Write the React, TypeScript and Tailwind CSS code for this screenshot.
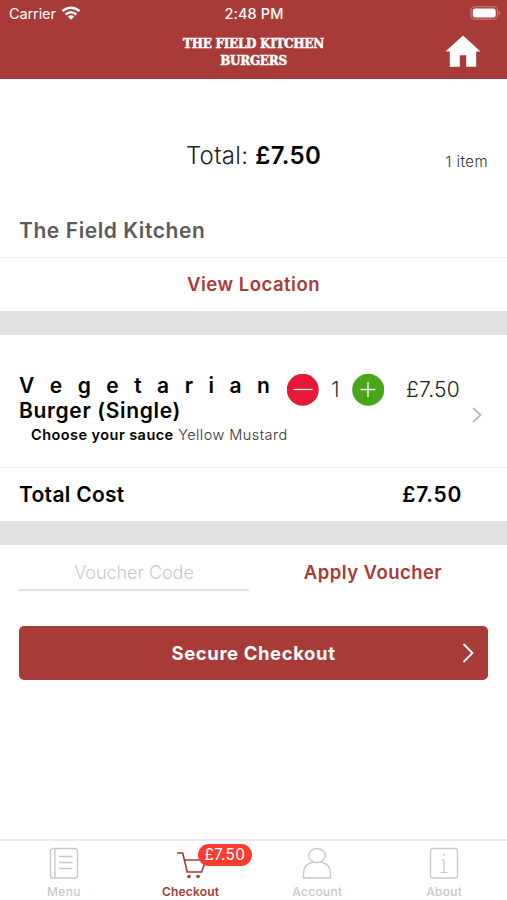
import React, { useState } from 'react';

interface TabProps {
    label: string;
    active?: boolean;
    badge?: string;
    children: React.ReactNode;
}

const Tab: React.FC<TabProps> = ({ label, active, badge, children }) => (
    <button className={`relative flex flex-1 flex-col items-center pt-1.5 ${active ? 'text-[#a83a38]' : 'text-[#c9c9c9]'}`}>
        <svg className="ml-px h-9 w-9" viewBox="0 0 36 36" fill="none" stroke="currentColor" strokeWidth="1.4">
            {children}
        </svg>
        <span className={`mt-px ml-px text-[12px] leading-4 ${active ? 'font-semibold tracking-[0.2px]' : 'font-medium tracking-[0.3px]'}`}>{label}</span>
        {badge && (
            <span className="absolute top-[3px] left-[71px] flex h-[22px] w-[54px] items-center justify-center rounded-full bg-[#fc3b31] text-[15.5px] tracking-[0.2px] text-white">
                {badge}
            </span>
        )}
    </button>
);

const StatusBar = () => (
    <div className="flex h-[27px] items-center justify-between pr-[6px] pl-[9px] text-[14.5px] text-white">
        <div className="flex flex-1 items-center gap-[5px]">
            <span className="tracking-[-0.1px]">Carrier</span>
            <svg className="mb-px h-[14px] w-[20px]" viewBox="0 0 20 14" fill="none" stroke="currentColor" strokeWidth="2.5">
                <path d="M1.5 5.2C6.2 .6 13.8 .6 18.5 5.2" />
                <path d="M4.6 8.5C7.6 5.6 12.4 5.6 15.4 8.5" />
                <path d="M10 13.8 6.8 10.5C8.6 8.9 11.4 8.9 13.2 10.5Z" fill="currentColor" stroke="none" />
            </svg>
        </div>
        <span className="mr-[2px] font-medium tracking-[0.1px]">2:48 PM</span>
        <div className="flex flex-1 justify-end">
            <svg className="mb-px h-[14px] w-[31px]" viewBox="0 0 31 14" fill="none">
                <rect x="1" y=".8" width="26.5" height="12.4" rx="3.8" stroke="#cf8280" strokeWidth="1.1" />
                <rect x="2.8" y="2.6" width="22.9" height="8.8" rx="2.2" fill="#fff" />
                <path d="M28.8 4.8c2 .8 2 3.6 0 4.4Z" fill="#cf8280" />
            </svg>
        </div>
    </div>
);

const App: React.FC = () => {
    const [quantity, setQuantity] = useState(1);
    const [voucher, setVoucher] = useState('');

    const cost = `£${(quantity * 7.5).toFixed(2)}`;

    return (
        <div className="flex h-[900px] w-[507px] flex-col overflow-hidden bg-white font-['Inter','Liberation_Sans',sans-serif] text-black">
            {/* Header */}
            <header className="h-[79px] bg-[#a83a38]">
                <StatusBar />
                <div className="flex h-[52px] items-start justify-between pr-[26px] pl-[26px]">
                    <span className="w-9" />
                    <h1 className="mt-[9px] text-center font-['DejaVu_Serif','Liberation_Serif',serif] text-[12px] leading-[17px] font-bold tracking-[-0.3px] text-white [-webkit-text-stroke:0.5px_white]">
                        THE FIELD KITCHEN
                        <br />
                        BURGERS
                    </h1>
                    <button aria-label="Home" className="mt-[8px]">
                        <svg className="h-8 w-9" viewBox="0 0 36 32" fill="#fff">
                            <path d="M18 .5 35.5 16.5h-4.3v15.2H21.2V20.3h-6.4v11.4H4.8v-15.2H.5Z" />
                        </svg>
                    </button>
                </div>
            </header>

            {/* Order summary */}
            <section className="h-[179px] border-b border-[#f0f0f0] px-[19px]">
                <div className="flex items-baseline pt-[61px]">
                    <span className="flex-1" />
                    <p className="text-[24px] leading-8 font-light tracking-[0.3px] text-[#222]">
                        Total: <span className="font-semibold text-black">{cost}</span>
                    </p>
                    <span className="relative top-[3px] flex-1 text-right text-[15px] font-light tracking-[0.45px] text-[#333]">{quantity} item</span>
                </div>
                <h2 className="mt-[43px] text-[21px] leading-8 font-semibold tracking-[0.57px] text-[#5b5b5b]">The Field Kitchen</h2>
            </section>
            <button className="h-[53px] text-[18.5px] font-semibold tracking-[0.52px] text-[#a83a38]">View Location</button>
            <div className="h-6 bg-[#e2e2e4]" />

            {/* Basket item */}
            <section className="flex h-[133px] border-b border-[#f0f0f0] pt-[38px] pl-[19px]">
                <div className="w-[267.5px]">
                    <h3 className="text-[21px] leading-[25px] font-semibold">
                        <span className="flex w-[251px] justify-between">
                            {'Vegetarian'.split('').map((letter, i) => (
                                <span key={i}>{letter}</span>
                            ))}
                        </span>
                        <span className="tracking-[0.65px]">Burger (Single)</span>
                    </h3>
                    <p className="pl-3 text-[14.5px] leading-6 font-light tracking-[0.45px] whitespace-nowrap text-[#333]">
                        <span className="font-semibold text-black">Choose your sauce</span> Yellow Mustard
                    </p>
                </div>
                <div className="flex h-[33px] items-center">
                    <button aria-label="Remove one" onClick={() => setQuantity(Math.max(1, quantity - 1))}>
                        <svg className="h-8 w-8" viewBox="0 0 32 32" stroke="#fff" strokeWidth="1.3">
                            <circle cx="15.7" cy="15.7" r="16" fill="#e71737" stroke="none" />
                            <path d="M6.5 15.5h19" />
                        </svg>
                    </button>
                    <span className="w-[34px] text-center text-[21px] font-light text-[#333]">{quantity}</span>
                    <button aria-label="Add one" onClick={() => setQuantity(quantity + 1)}>
                        <svg className="h-8 w-8 overflow-visible" viewBox="0 0 32 32" stroke="#fff" strokeWidth="1.3">
                            <circle cx="15.2" cy="15.7" r="16" fill="#48a61b" stroke="none" />
                            <path d="M7.5 15.5h15M15 8v15" />
                        </svg>
                    </button>
                    <span className="ml-[21.5px] text-[21px] font-light tracking-[0.2px] text-[#222]">{cost}</span>
                </div>
                <svg className="mt-[34px] ml-auto h-4 w-[35px]" viewBox="0 0 35 16" fill="none" stroke="#bdbdbd" strokeWidth="2">
                    <path d="m1 1 7.5 7L1 15" />
                </svg>
            </section>
            <div className="flex h-[53px] items-center justify-between pr-[45px] pl-[19px] text-[21px] font-semibold">
                <span className="tracking-[0.3px]">Total Cost</span>
                <span className="tracking-[0.7px]">{cost}</span>
            </div>
            <div className="h-6 bg-[#e2e2e4]" />

            {/* Voucher and payment */}
            <section className="px-[19px]">
                <div className="flex">
                    <input
                        value={voucher}
                        onChange={(e) => setVoucher(e.target.value)}
                        placeholder="Voucher Code"
                        className="h-[46px] w-[230px] border-b-2 border-[#e4e4e6] pt-[10px] text-center text-[18px] font-light tracking-[-0.05px] outline-none placeholder:text-[#c8c8cc]"
                    />
                    <button className="flex-1 pt-[9px] pl-[9px] text-[18.5px] font-semibold tracking-[0.45px] text-[#a83a38]">Apply Voucher</button>
                </div>
                <button className="relative mt-[35px] h-[54px] w-full rounded-[5px] bg-[#a83a38] pt-px text-[18.5px] font-bold tracking-[0.6px] text-white">
                    Secure Checkout
                    <svg className="absolute top-[17px] right-[14px] h-5 w-3" viewBox="0 0 12 20" fill="none" stroke="currentColor" strokeWidth="1.8">
                        <path d="m1.5 1 9 9-9 9" />
                    </svg>
                </button>
            </section>

            {/* Tab bar */}
            <nav className="mt-auto flex h-[61px] border-t-2 border-[#ebe9e9]">
                <Tab label="Menu">
                    <rect x="4.5" y="1.5" width="27" height="29.5" rx="2.5" />
                    <path d="M8.8 1.5V31M13 9.5h13.5M13 15.5h13.5M13 21.5h13.5" />
                </Tab>
                <Tab label="Checkout" active badge={cost}>
                    <path d="M4 6h5.7l4.5 19h14.5l4-12H11.5" strokeWidth="1.6" />
                    <circle cx="16" cy="29.5" r="1.8" fill="currentColor" stroke="none" />
                    <circle cx="25" cy="29.5" r="1.8" fill="currentColor" stroke="none" />
                </Tab>
                <Tab label="Account">
                    <ellipse cx="18" cy="8.5" rx="8.3" ry="7" />
                    <path d="M14.5 15C8.500 16 4.500 20 4.500 26v5h27v-5c0-6-4-10-10-11" />
                </Tab>
                <Tab label="About">
                    <rect x="4.5" y="1.5" width="27" height="29.5" rx="2.5" />
                    <path d="M15 13h3v12.500M14.500 25.500h7" strokeWidth="1.2" />
                    <circle cx="17.8" cy="8" r="1.1" fill="currentColor" stroke="none" />
                </Tab>
            </nav>
        </div>
    );
};

export default App;
